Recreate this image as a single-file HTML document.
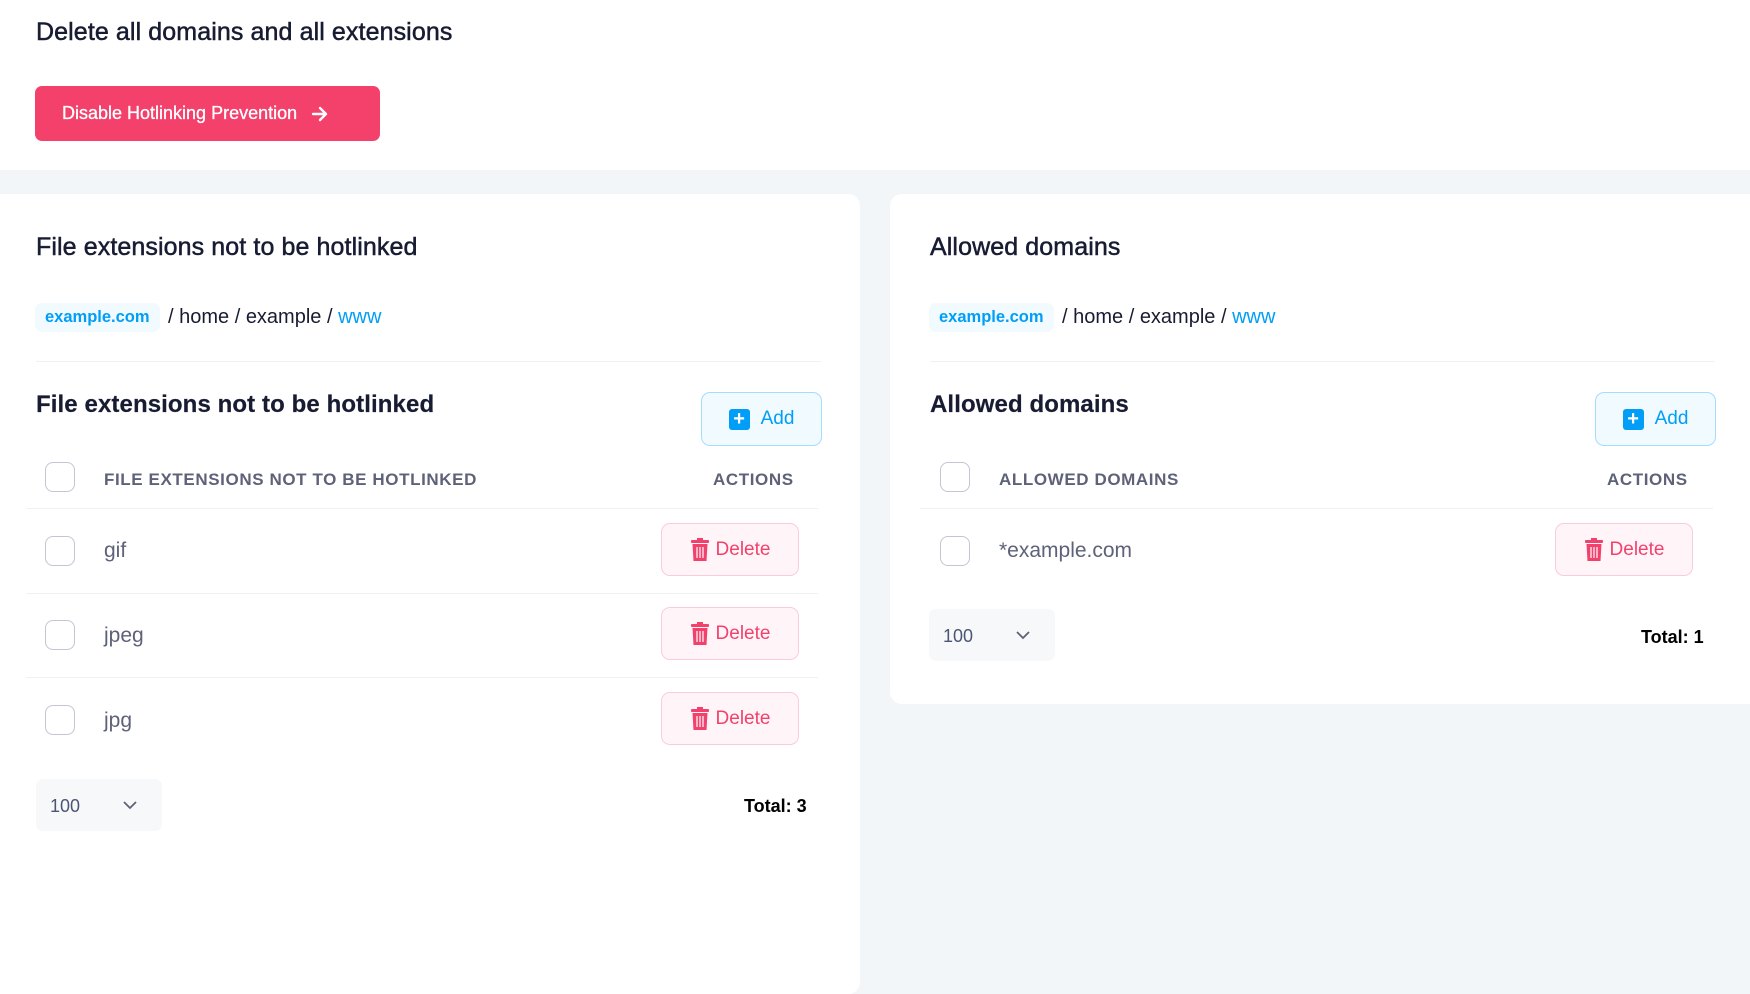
<!DOCTYPE html>
<html><head><meta charset="utf-8"><style>
*{margin:0;padding:0;box-sizing:border-box}
body{width:1750px;height:850px;background:#f3f6f9;font-family:"Liberation Sans",Arial,sans-serif;position:relative;overflow:hidden;color:#181c32}
.a{position:absolute}
.card{position:absolute;background:#fff;border-radius:12px}
.t{font-size:25px;font-weight:500;white-space:nowrap;line-height:1;-webkit-text-stroke:0.5px #181c32;letter-spacing:0.1px}
.pill{background:#f1faff;color:#009ef7;font-size:16.5px;font-weight:700;border-radius:7px;height:29px;line-height:29px;padding:0 10px}
.bc{font-size:20px;line-height:1;white-space:nowrap}
.sep{height:1px;background:#eff2f5}
.cb{width:30px;height:30px;border:1.5px solid #c4c4d4;border-radius:8px;background:#fff}
.hd{font-size:17px;font-weight:700;color:#5e6278;white-space:nowrap;line-height:1;letter-spacing:0.6px}
.rt{font-size:21px;color:#5e6278;line-height:1}
.add{background:#f1faff;border:1.5px solid #a6dcfc;border-radius:9px;color:#009ef7;font-size:19px;display:flex;align-items:center;justify-content:center;gap:11px}
.pl{width:21px;height:21px;background:#009ef7;border-radius:3px;color:#fff;font-weight:700;font-size:20px;line-height:21px;text-align:center}
.del{background:#fff5f8;border:1.5px solid #fbcbd9;border-radius:9px;color:#f1416c;font-size:19px;display:flex;align-items:center;justify-content:center;gap:6px;width:138px;height:53px}
.sel{background:#f7f8f9;border-radius:7px;width:126px;height:52px;font-size:18px;color:#4b5675}
.tot{font-size:18px;font-weight:700;color:#000;line-height:1;white-space:nowrap}
</style></head><body>
<div class="card" style="left:-20px;top:-20px;width:1790px;height:190px;border-radius:12px"></div>
<div class="a t" style="left:36px;top:20px">Delete all domains and all extensions</div>
<div class="a" style="left:35px;top:86px;width:345px;height:55px;background:#f3416c;border-radius:7px;color:#fff;font-size:18px;font-weight:500;display:flex;align-items:center;padding-left:27px;-webkit-text-stroke:0.3px #fff">Disable Hotlinking Prevention
<svg width="18" height="16" viewBox="0 0 18 16" style="margin-left:14px"><path d="M2 8H15M9 2l6 6-6 6" stroke="#fff" stroke-width="2.4" fill="none" stroke-linecap="round" stroke-linejoin="round"/></svg></div>

<div class="card" style="left:-20px;top:194px;width:880px;height:800px"></div>
<div class="card" style="left:890px;top:194px;width:880px;height:510px"></div>

<div class="a t" style="left:36px;top:235px">File extensions not to be hotlinked</div>
<div class="a pill" style="left:35px;top:303px">example.com</div>
<div class="a bc" style="left:168px;top:307px">/ home / example / <span style="color:#009ef7">www</span></div>
<div class="a sep" style="left:36px;top:361px;width:785px"></div>
<div class="a t" style="left:36px;top:393px;font-weight:700;font-size:24px;-webkit-text-stroke:0.2px #181c32">File extensions not to be hotlinked</div>
<div class="a add" style="left:701px;top:392px;width:121px;height:54px"><div class="pl">+</div>Add</div>
<div class="a cb" style="left:45px;top:462px"></div>
<div class="a hd" style="left:104px;top:471px">FILE EXTENSIONS NOT TO BE HOTLINKED</div>
<div class="a hd" style="left:713px;top:471px">ACTIONS</div>
<div class="a sep" style="left:26px;top:508px;width:792px"></div>
<div class="a cb" style="left:45px;top:536px"></div><div class="a rt" style="left:104px;top:540px">gif</div>
<div class="a del" style="left:661px;top:523px"><svg width="20" height="24" viewBox="0 0 20 24"><rect x="1" y="2" width="18" height="3" rx="1" fill="#f1416c"/><rect x="7" y="0" width="6" height="3" fill="#f1416c"/><path d="M2.5 6h15l-1 17H3.5z" fill="#f1416c"/><path d="M7 9v11M10 9v11M13 9v11" stroke="#fff" stroke-width="1.2"/></svg>Delete</div>
<div class="a sep" style="left:26px;top:593px;width:792px"></div>
<div class="a cb" style="left:45px;top:620px"></div><div class="a rt" style="left:104px;top:625px">jpeg</div>
<div class="a del" style="left:661px;top:607px"><svg width="20" height="24" viewBox="0 0 20 24"><rect x="1" y="2" width="18" height="3" rx="1" fill="#f1416c"/><rect x="7" y="0" width="6" height="3" fill="#f1416c"/><path d="M2.5 6h15l-1 17H3.5z" fill="#f1416c"/><path d="M7 9v11M10 9v11M13 9v11" stroke="#fff" stroke-width="1.2"/></svg>Delete</div>
<div class="a sep" style="left:26px;top:677px;width:792px"></div>
<div class="a cb" style="left:45px;top:705px"></div><div class="a rt" style="left:104px;top:710px">jpg</div>
<div class="a del" style="left:661px;top:692px"><svg width="20" height="24" viewBox="0 0 20 24"><rect x="1" y="2" width="18" height="3" rx="1" fill="#f1416c"/><rect x="7" y="0" width="6" height="3" fill="#f1416c"/><path d="M2.5 6h15l-1 17H3.5z" fill="#f1416c"/><path d="M7 9v11M10 9v11M13 9v11" stroke="#fff" stroke-width="1.2"/></svg>Delete</div>
<div class="a sel" style="left:36px;top:779px"><span class="a" style="left:14px;top:17px">100</span><svg class="a" style="left:86px;top:21px" width="16" height="10" viewBox="0 0 16 10"><path d="M2 2l6 6 6-6" stroke="#5e6278" stroke-width="1.8" fill="none"/></svg></div>
<div class="a tot" style="left:744px;top:797px">Total: 3</div>

<div class="a t" style="left:930px;top:235px">Allowed domains</div>
<div class="a pill" style="left:929px;top:303px">example.com</div>
<div class="a bc" style="left:1062px;top:307px">/ home / example / <span style="color:#009ef7">www</span></div>
<div class="a sep" style="left:930px;top:361px;width:785px"></div>
<div class="a t" style="left:930px;top:393px;font-weight:700;font-size:24px;-webkit-text-stroke:0.2px #181c32">Allowed domains</div>
<div class="a add" style="left:1595px;top:392px;width:121px;height:54px"><div class="pl">+</div>Add</div>
<div class="a cb" style="left:940px;top:462px"></div>
<div class="a hd" style="left:999px;top:471px">ALLOWED DOMAINS</div>
<div class="a hd" style="left:1607px;top:471px">ACTIONS</div>
<div class="a sep" style="left:920px;top:508px;width:793px"></div>
<div class="a cb" style="left:940px;top:536px"></div><div class="a rt" style="left:999px;top:540px">*example.com</div>
<div class="a del" style="left:1555px;top:523px"><svg width="20" height="24" viewBox="0 0 20 24"><rect x="1" y="2" width="18" height="3" rx="1" fill="#f1416c"/><rect x="7" y="0" width="6" height="3" fill="#f1416c"/><path d="M2.5 6h15l-1 17H3.5z" fill="#f1416c"/><path d="M7 9v11M10 9v11M13 9v11" stroke="#fff" stroke-width="1.2"/></svg>Delete</div>
<div class="a sel" style="left:929px;top:609px"><span class="a" style="left:14px;top:17px">100</span><svg class="a" style="left:86px;top:21px" width="16" height="10" viewBox="0 0 16 10"><path d="M2 2l6 6 6-6" stroke="#5e6278" stroke-width="1.8" fill="none"/></svg></div>
<div class="a tot" style="left:1641px;top:628px">Total: 1</div>
</body></html>
